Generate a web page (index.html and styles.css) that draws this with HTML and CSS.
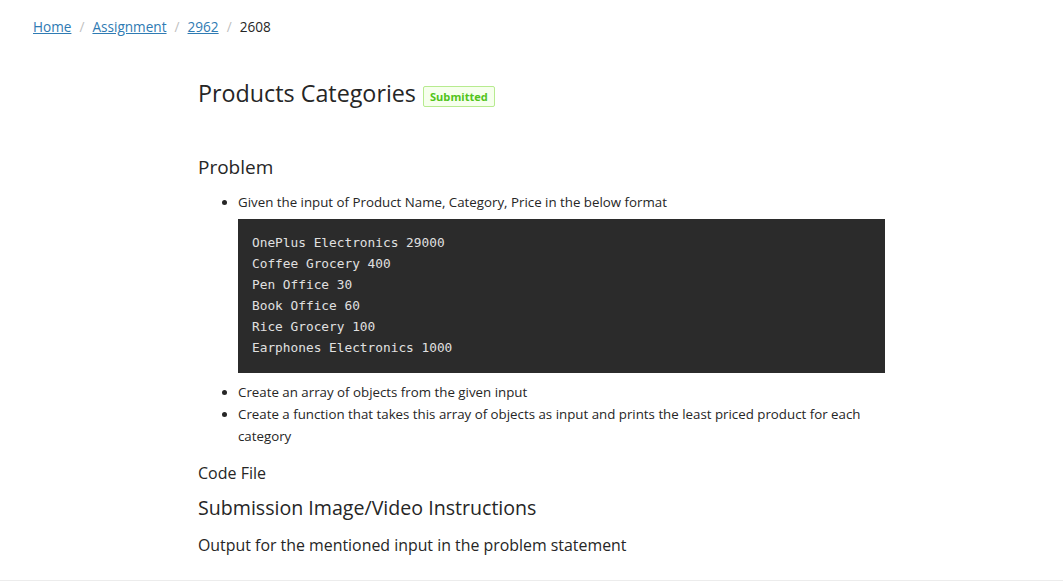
FILE: index.html
```html
<!DOCTYPE html>
<html>
<head>
<meta charset="utf-8">
<link rel="stylesheet" href="styles.css">
</head>
<body>
<div class="page">
  <nav class="crumbs">
    <a href="#">Home</a><span class="sep">/</span>
    <a href="#">Assignment</a><span class="sep">/</span>
    <a href="#">2962</a><span class="sep">/</span>
    <span class="cur">2608</span>
  </nav>
  <main class="content">
    <div class="title-row">
      <h1 class="title">Products Categories</h1>
      <span class="badge">Submitted</span>
    </div>
    <h2 class="h2 problem">Problem</h2>
    <ul class="list">
      <li>Given the input of Product Name, Category, Price in the below format
        <pre class="code">OnePlus Electronics 29000
Coffee Grocery 400
Pen Office 30
Book Office 60
Rice Grocery 100
Earphones Electronics 1000</pre>
      </li>
      <li>Create an array of objects from the given input</li>
      <li>Create a function that takes this array of objects as input and prints the least priced product for each category</li>
    </ul>
    <h3 class="h3 codefile">Code File</h3>
    <h2 class="h2 sub">Submission Image/Video Instructions</h2>
    <p class="out">Output for the mentioned input in the problem statement</p>
  </main>
</div>
</body>
</html>
```
FILE: styles.css
```css
html, body { margin: 0; padding: 0; background: #fff; }
body { font-family: "Open Sans", "Noto Sans", sans-serif; color: #262626; }
.page { height: 581px; border-bottom: 1px solid #ececec; box-sizing: border-box; overflow: hidden; }
.crumbs { padding: 17px 0 0 33px; font-size: 13.6px; line-height: 20px; display: flex; align-items: center; }
.crumbs a { color: #2f7bb3; text-decoration: underline; }
.crumbs .sep { color: #bfbfbf; margin: 0 8px; }
.crumbs .cur { color: #262626; }
.content { margin-left: 198px; width: 687px; }
.title-row { display: flex; align-items: center; margin-top: 41px; height: 30px; }
.title { font-size: 23.3px; font-weight: 400; margin: 0; line-height: 30px; }
.badge { margin-left: 7px; font-size: 11.1px; font-weight: 700; color: #52c41a; background: #f6ffed; border: 1px solid #b7eb8f; padding: 0 6px; line-height: 19px; border-radius: 2px; margin-top: 6px; }
.h2 { font-size: 19px; font-weight: 400; margin: 0; line-height: 26px; }
.problem { margin-top: 46px; }
.list { margin: 11px 0 0; padding-left: 40px; font-size: 13.3px; line-height: 22px; }
.list li { padding-left: 0; }
.code { margin: 6px 0 8px; background: #2b2b2b; color: #e0e0e0; font-family: "DejaVu Sans Mono", monospace; font-size: 12.8px; line-height: 21px; padding: 13px 14px 15px; }
.h3 { font-size: 16px; font-weight: 500; margin: 15px 0 0; line-height: 22px; }
.sub { margin-top: 11px; font-size: 19.6px; }
.out { font-size: 15.9px; font-weight: 500; margin: 13px 0 0; line-height: 22px; }
```
